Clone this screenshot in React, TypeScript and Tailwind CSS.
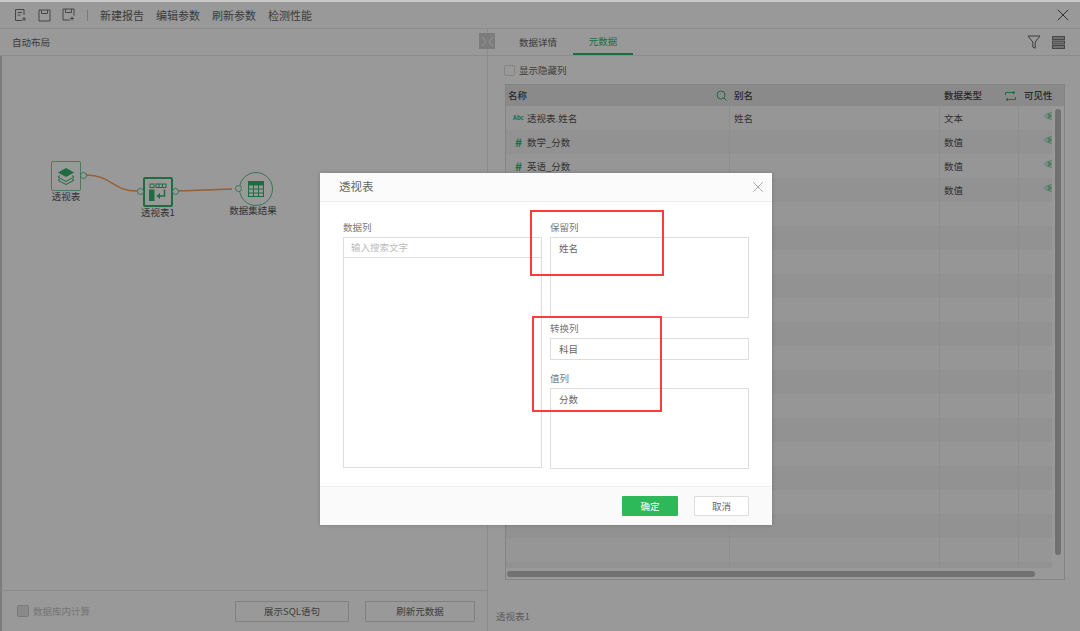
import { X } from "lucide-react"

const FONT = "[font-family:'Noto_Sans_CJK_SC','Liberation_Sans',sans-serif]"
const GREEN = "#35b56b"

const ROWS = [
  { kind: "abc", name: "透视表.姓名", alias: "姓名", type: "文本" },
  { kind: "num", name: "数学_分数", alias: "", type: "数值" },
  { kind: "num", name: "英语_分数", alias: "", type: "数值" },
  { kind: "num", name: "语文_分数", alias: "", type: "数值" },
  ...Array.from({ length: 16 }, () => ({ kind: "", name: "", alias: "", type: "" })),
]

// ─── Icons ───────────────────────────────────────────────────────────────────
function DocPlusIcon() {
  return (
    <svg width="13" height="14" viewBox="0 0 13 14" fill="none" stroke="#777" strokeWidth="1">
      <path d="M8 12.5H1.5V1.5H10V7" />
      <path d="M3.5 4.5h4.5M3.5 7h3M10 9v4M8 11h4" />
    </svg>
  )
}

function SaveIcon() {
  return (
    <svg width="13" height="13" viewBox="0 0 13 13" fill="none" stroke="#777" strokeWidth="1">
      <path d="M1 1h11v11H1z" />
      <path d="M3.5 1v3.5h6V1" />
    </svg>
  )
}

function SavePlusIcon() {
  return (
    <svg width="13" height="14" viewBox="0 0 13 14" fill="none" stroke="#777" strokeWidth="1">
      <path d="M8 12H1V1h11v6.5" />
      <path d="M3.5 1v3.5h6V1M10 8.5v4M8 10.5h4" />
    </svg>
  )
}

function FilterIcon() {
  return (
    <svg width="14" height="14" viewBox="0 0 14 14" fill="none" stroke="#666" strokeWidth="1">
      <path d="M1 1h12L8.2 7v6.2L5.8 12V7z" />
    </svg>
  )
}

function StackIcon() {
  return (
    <svg width="13" height="13" viewBox="0 0 13 13" fill="#bbb" stroke="#777" strokeWidth="1">
      <rect x="0.5" y="0.5" width="12" height="3" />
      <rect x="0.5" y="5" width="12" height="3" />
      <rect x="0.5" y="9.5" width="12" height="3" />
    </svg>
  )
}

function SearchIcon() {
  return (
    <svg width="11" height="11" viewBox="0 0 11 11" fill="none" stroke={GREEN} strokeWidth="1">
      <circle cx="5" cy="5" r="4" />
      <path d="M8 8l2.5 2.5" />
    </svg>
  )
}

function SwapIcon() {
  return (
    <svg width="11" height="10" viewBox="0 0 11 10" fill="none" stroke={GREEN} strokeWidth="1">
      <path d="M0.5 4V1.5h9M8 0l2 1.5L8 3M10.500 6v2.500h-9M3 7L1 8.500 3 10" />
    </svg>
  )
}

function EyeIcon() {
  return (
    <svg width="8" height="8" viewBox="0 0 8 8" fill="none" stroke="#7fd0a5" strokeWidth="1">
      <path d="M8 1C5 0.500 2 2 0.500 4 2 6 5 7.500 8 7" />
      <circle cx="5.500" cy="4" r="1.700" fill="#7fd0a5" />
    </svg>
  )
}

function TypeIcon({ kind }: { kind: string }) {
  if (kind === "abc") {
    return <span className="w-[15px] text-center text-[6px] leading-none font-semibold text-[#35b56b]">Abc</span>
  }
  if (kind === "num") {
    return <span className="w-[15px] text-center text-[12px] leading-none font-bold text-[#35b56b]">#</span>
  }
  return null
}

function LayersIcon() {
  return (
    <svg width="18" height="18" viewBox="0 0 18 18">
      <path d="M9 1l8 4.500L9 10 1 5.500z" fill={GREEN} />
      <path d="M3 8.500L1 10l8 4.500L17 10l-2-1.500M3 12L1 13.300 9 17.500l8-4.200L15 12" fill="none" stroke={GREEN} strokeWidth="1" />
    </svg>
  )
}

function PivotIcon() {
  return (
    <svg width="18" height="18" viewBox="0 0 18 18" fill="none" stroke={GREEN} strokeWidth="1">
      <rect x="1" y="1" width="4" height="3.500" />
      <rect x="7" y="1" width="10" height="3.500" />
      <path d="M10 1v3.500M13.500 1v3.500" />
      <rect x="0.500" y="7" width="4.500" height="11" fill={GREEN} />
      <path d="M15.500 6.500v6.500H8.500" strokeWidth="1.500" />
      <path d="M11 10l-3.500 3 3.500 3z" fill={GREEN} stroke="none" />
    </svg>
  )
}

function TableIcon() {
  return (
    <svg width="16" height="16" viewBox="0 0 16 16" fill="none" stroke={GREEN} strokeWidth="1">
      <rect x="0.500" y="0.500" width="15" height="15" />
      <rect x="0.500" y="0.500" width="15" height="3.500" fill={GREEN} />
      <path d="M0.500 8h15M0.500 12h15M5.500 4v11.500M10.500 4v11.500" />
    </svg>
  )
}

function Port({ className }: { className: string }) {
  return <span className={`absolute h-[7px] w-[7px] rounded-full border border-[#5cc48c] bg-white ${className}`} />
}

// ─── Left canvas ─────────────────────────────────────────────────────────────
function Canvas() {
  return (
    <div className="relative flex-1 border-l-2 border-[#cfcfcf]">
      <svg className="absolute top-0 left-[-2px]" width="486" height="200" fill="none" stroke="#f2a05a" strokeWidth="1.3">
        <path d="M86 119C112 119 112 135 137 135" />
        <path d="M178 135L232 133" />
      </svg>

      {/* 透视表 */}
      <div className="absolute top-[105px] left-[49px] flex h-[30px] w-[30px] items-center justify-center rounded-[2px] border border-[#74cf9c] bg-white">
        <LayersIcon />
        <Port className="top-[10px] right-[-7px]" />
      </div>
      <span className="absolute top-[133px] left-[49px] w-[30px] text-center text-[9.5px] whitespace-nowrap text-[#555]">透视表</span>

      {/* 透视表1 */}
      <div className="absolute top-[121px] left-[141px] flex h-[30px] w-[30px] items-center justify-center rounded-[2px] border-2 border-[#35b56b] bg-white">
        <PivotIcon />
        <Port className="top-[9px] left-[-8px]" />
        <Port className="top-[9px] right-[-8px]" />
      </div>
      <span className="absolute top-[149px] left-[138px] w-[36px] text-center text-[9.5px] whitespace-nowrap text-[#555]">透视表1</span>

      {/* 数据集结果 */}
      <div className="absolute top-[116px] left-[237px] flex h-[34px] w-[34px] items-center justify-center rounded-full border border-[#5cc48c] bg-white">
        <TableIcon />
        <Port className="top-[12px] left-[-5px]" />
      </div>
      <span className="absolute top-[147px] left-[227px] w-[48px] text-center text-[9.5px] whitespace-nowrap text-[#555]">数据集结果</span>
    </div>
  )
}

// ─── Metadata table ──────────────────────────────────────────────────────────
function MetaTable() {
  return (
    <div className="relative mr-[15px] ml-[17px] flex h-[496px] flex-col border border-[#ddd]">
      <div className="flex h-[21px] shrink-0 items-center bg-[#e6e6e6] text-[9.5px] font-medium text-[#444]">
        <div className="flex w-[224px] items-center justify-between pr-[3px] pl-[2px]">
          <span>名称</span>
          <SearchIcon />
        </div>
        <div className="w-[210px] pl-[4px]">别名</div>
        <div className="flex w-[79px] items-center justify-between pr-[3px] pl-[4px]">
          <span>数据类型</span>
          <SwapIcon />
        </div>
        <div className="pl-[5px]">可见性</div>
      </div>
      <div className="mr-[12px] flex h-[462px] flex-col overflow-hidden">
        {ROWS.map((row, i) => (
          <div key={i} className={`flex h-[24px] shrink-0 items-center text-[9.5px] text-[#555] ${i % 2 === 0 ? "bg-[#fafafa]" : "bg-[#f4f4f4]"}`}>
            <div className="flex h-full w-[224px] items-center gap-[1px] border-r border-[#ececec] pl-[5px]">
              <TypeIcon kind={row.kind} />
              <span>{row.name}</span>
            </div>
            <div className="flex h-full w-[210px] items-center border-r border-[#ececec] pl-[4px]">{row.alias}</div>
            <div className="flex h-full w-[79px] items-center border-r border-[#ececec] pl-[4px]">{row.type}</div>
            <div className="flex flex-1 justify-end pb-[4px]">{row.kind && <EyeIcon />}</div>
          </div>
        ))}
      </div>
      {/* scrollbars */}
      <span className="absolute top-[24px] right-[3px] h-[446px] w-[6px] rounded-full bg-[#bdbdbd]" />
      <span className="absolute bottom-[2px] left-[1px] h-[6px] w-[528px] rounded-full bg-[#bdbdbd]" />
    </div>
  )
}

// ─── Dialog ──────────────────────────────────────────────────────────────────
function FieldLabel({ children, className = "" }: { children: string; className?: string }) {
  return <div className={`text-[9.5px] leading-none text-[#777] ${className}`}>{children}</div>
}

function Dialog() {
  return (
    <div className="absolute top-[173px] left-[320px] flex h-[352px] w-[452px] flex-col bg-white shadow-[0_0_4px_rgba(0,0,0,0.2)]">
      <div className="flex h-[29px] shrink-0 items-center justify-between border-b border-[#eee] bg-[#fbfbfb] pr-[5px] pl-[19px]">
        <span className="text-[11.5px] text-[#666]">透视表</span>
        <X size={18} strokeWidth={1.1} color="#999" />
      </div>
      <div className="grid flex-1 grid-cols-[199px_199px] gap-x-[8px] px-[23px] pt-[20px]">
        <div className="flex h-[246px] flex-col">
          <FieldLabel className="h-[15px] pt-[1px]">数据列</FieldLabel>
          <div className="flex h-[21px] shrink-0 items-center border border-[#ddd] pl-[7px] text-[9.5px] text-[#bbb]">输入搜索文字</div>
          <div className="flex-1 border-x border-b border-[#ddd]" />
        </div>
        <div className="flex flex-col">
          <FieldLabel className="h-[15px] pt-[1px]">保留列</FieldLabel>
          <div className="h-[81px] border border-[#ddd] pt-[3px] pl-[8px] text-[9.5px] text-[#666]">姓名</div>
          <FieldLabel className="mt-[4px] h-[16px] pt-[2px]">转换列</FieldLabel>
          <div className="flex h-[22px] items-center border border-[#ddd] pl-[8px] text-[9.5px] text-[#666]">科目</div>
          <FieldLabel className="mt-[13px] h-[15px] pt-[1px]">值列</FieldLabel>
          <div className="h-[81px] border border-[#ddd] pt-[3px] pl-[8px] text-[9.5px] text-[#666]">分数</div>
        </div>
      </div>
      <div className="flex h-[39px] shrink-0 items-center justify-end gap-[16px] border-t border-[#f0f0f0] bg-[#fafafa] pr-[23px]">
        <button type="button" className="h-[20px] w-[56px] rounded-[1px] bg-[#2db85a] text-[9.5px] text-white">确定</button>
        <button type="button" className="h-[20px] w-[55px] rounded-[1px] border border-[#ddd] bg-white text-[9.5px] text-[#666]">取消</button>
      </div>

      {/* 标注框 */}
      <span className="absolute top-[37px] left-[210px] h-[66px] w-[134px] border-2 border-[#ff3b3b]" />
      <span className="absolute top-[143px] left-[212px] h-[96px] w-[130px] border-2 border-[#ff3b3b]" />
    </div>
  )
}

export default function App() {
  return (
    <div className={`relative flex h-[631px] w-[1080px] flex-col overflow-hidden bg-white ${FONT}`}>
      {/* Top bar */}
      <div className="flex h-[29px] shrink-0 items-center border-b border-[#eaeaea] pt-[2px] pr-[7px] pl-[14px]">
        <div className="flex w-[73px] items-center gap-[11px]">
          <DocPlusIcon />
          <SaveIcon />
          <SavePlusIcon />
        </div>
        <span className="h-[11px] w-px bg-[#ccc]" />
        <div className="ml-[12px] flex gap-[12px] text-[11px] text-[#666]">
          <span>新建报告</span>
          <span>编辑参数</span>
          <span>刷新参数</span>
          <span>检测性能</span>
        </div>
        <X size={20} strokeWidth={1.1} color="#444" className="ml-auto" />
      </div>

      <div className="flex flex-1">
        {/* Left */}
        <div className="flex w-[488px] shrink-0 flex-col border-r border-[#eaeaea]">
          <div className="flex h-[27px] shrink-0 items-center border-b border-[#eaeaea] pl-[12px] text-[9.5px] text-[#666]">自动布局</div>
          <Canvas />
          <div className="flex h-[41px] shrink-0 items-center border-t border-l-2 border-[#eaeaea] border-l-[#cfcfcf] pl-[15px]">
            <span className="h-[12px] w-[12px] rounded-[2px] border border-[#ccc] bg-[#e4e4e4]" />
            <span className="ml-[4px] w-[202px] text-[9.5px] text-[#c4c4c4]">数据库内计算</span>
            <button type="button" className="h-[21px] w-[114px] rounded-[1px] border border-[#d5d5d5] text-[9.5px] text-[#666]">展示SQL语句</button>
            <button type="button" className="ml-[16px] h-[21px] w-[110px] rounded-[1px] border border-[#d5d5d5] text-[9.5px] text-[#666]">刷新元数据</button>
          </div>
        </div>

        {/* Right */}
        <div className="flex flex-1 flex-col">
          <div className="flex h-[27px] shrink-0 items-end border-b border-[#eaeaea] pl-[31px] text-[9.5px]">
            <span className="flex h-[25px] w-[54px] items-center text-[#666]">数据详情</span>
            <span className="flex h-[26px] w-[60px] items-center justify-center border-b-2 border-[#35b56b] text-[#35b56b]">元数据</span>
            <div className="mr-[15px] ml-auto flex h-[26px] items-center gap-[11px]">
              <FilterIcon />
              <StackIcon />
            </div>
          </div>
          <div className="flex h-[28px] shrink-0 items-center pt-[1px] pl-[16px] text-[9.5px] text-[#666]">
            <span className="h-[11px] w-[11px] rounded-[2px] border border-[#ddd]" />
            <span className="ml-[4px]">显示隐藏列</span>
          </div>
          <MetaTable />
          <div className="mt-[29px] pl-[8px] text-[9.5px] text-[#999]">透视表1</div>
        </div>
      </div>

      {/* Collapse handle */}
      <div className="absolute top-[33px] left-[479px] flex h-[16px] w-[16px] items-center justify-center bg-[#cfcfcf]">
        <svg width="13" height="11" viewBox="0 0 13 11" fill="none" stroke="#fff" strokeWidth="1">
          <path d="M1 1l4 4.500-4 4.500M12 1L8 5.500l4 4.500" />
        </svg>
      </div>

      {/* Modal mask */}
      <div className="absolute inset-x-0 top-[2px] bottom-0 bg-black/40" />
      <span className="absolute inset-x-0 top-0 h-[2px] bg-[#c9c9c9]" />
      <Dialog />
    </div>
  )
}
